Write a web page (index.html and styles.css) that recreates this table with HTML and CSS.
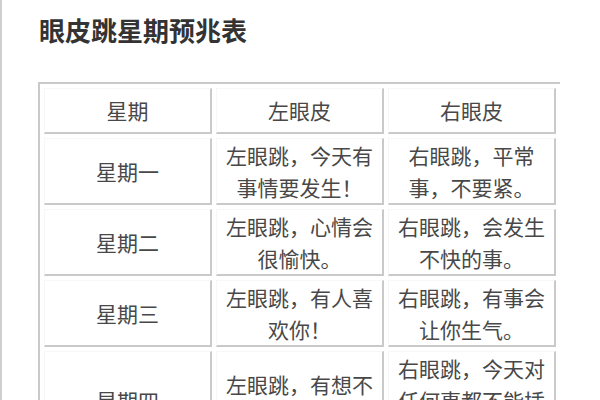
FILE: index.html
```html
<!DOCTYPE html>
<html lang="zh-CN">
<head>
<meta charset="utf-8">
<title>眼皮跳星期预兆表</title>
<link rel="stylesheet" href="styles.css">
</head>
<body>
<div class="page">
  <h1 class="title">眼皮跳星期预兆表</h1>
  <table class="omen">
    <thead>
      <tr><th>星期</th><th>左眼皮</th><th>右眼皮</th></tr>
    </thead>
    <tbody>
      <tr><td>星期一</td><td>左眼跳，今天有事情要发生！</td><td>右眼跳，平常事，不要紧。</td></tr>
      <tr><td>星期二</td><td>左眼跳，心情会很愉快。</td><td>右眼跳，会发生不快的事。</td></tr>
      <tr><td>星期三</td><td>左眼跳，有人喜欢你！</td><td>右眼跳，有事会让你生气。</td></tr>
      <tr><td>星期四</td><td>左眼跳，有想不到的好事！</td><td>右眼跳，今天对任何事都不能插手。</td></tr>
    </tbody>
  </table>
</div>
</body>
</html>
```
FILE: styles.css
```css
html, body {
  margin: 0;
  padding: 0;
  background: #fff;
}
.page {
  min-height: 100vh;
  box-sizing: border-box;
  border-left: 2px solid #cfcfcf;
  padding: 13px 0 0 36px;
  font-family: "Noto Sans CJK SC", "Noto Sans", sans-serif;
  color: #484848;
}
.title {
  margin: 0 0 35px 1px;
  font-size: 26px;
  line-height: 34px;
  font-weight: bold;
  color: #333;
}
.omen {
  table-layout: fixed;
  width: 522px;
  border-collapse: separate;
  border-spacing: 4px;
  border-top: 2px solid #c9c9c9;
  border-left: 2px solid #c9c9c9;
}
.omen th,
.omen td {
  width: 165px;
  box-sizing: border-box;
  border-top: 1px solid #f7f7f7;
  border-left: 1px solid #f7f7f7;
  border-right: 2px solid #c9c9c9;
  border-bottom: 2px solid #c9c9c9;
  text-align: center;
  vertical-align: middle;
  font-size: 21px;
  line-height: 32px;
  color: #484848;
  padding: 0;
}
.omen th {
  font-weight: normal;
  padding: 5px 0 6px;
}
```
